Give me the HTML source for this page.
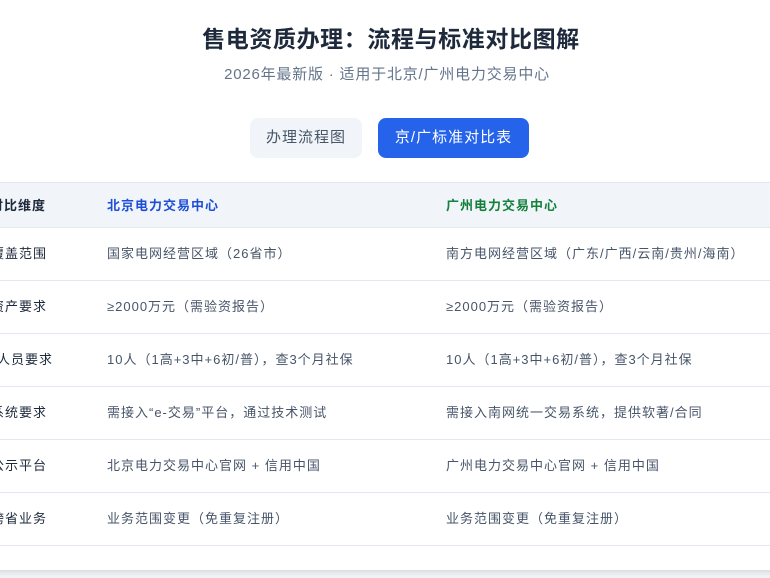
<!DOCTYPE html>
<html><head><meta charset="utf-8"><style>
*{margin:0;padding:0;box-sizing:border-box}
body{width:770px;height:578px;overflow:hidden;background:#f1f3f6;font-family:"Liberation Sans","Noto Sans CJK SC",sans-serif;position:relative}
.card{position:absolute;left:-40px;top:0;width:850px;height:570px;background:#fff;box-shadow:0 2px 6px rgba(0,0,0,.12)}
h1{position:absolute;left:6px;width:770px;top:24px;text-align:center;font-size:23px;font-weight:700;color:#1e293b;line-height:30px;letter-spacing:0.6px}
.sub{position:absolute;left:2px;width:770px;top:65px;text-align:center;font-size:15px;color:#64748b;line-height:20px;letter-spacing:0.8px}
.btn{position:absolute;top:118px;height:40px;border-radius:8px;font-size:15px;line-height:40px;text-align:center;letter-spacing:1px}
.b1{left:250px;width:112px;background:#f1f5f9;color:#475569}
.b2{left:378px;width:151px;background:#2563eb;color:#fff}
.row{position:absolute;left:0;width:770px;border-bottom:1px solid #e2e8f0;font-size:13px;color:#475569;letter-spacing:1px}
.row span{position:absolute;top:0;white-space:nowrap}
.c1{left:-9px;color:#1e293b}
.c2{left:107px}.c3{left:446px}
.hd{top:182px;height:46px;background:#f1f5f9;border-top:1px solid #e2e8f0;line-height:45px;font-weight:700}
.hd .c2{color:#1d4ed8}.hd .c3{color:#15803d}
.r{height:53px;line-height:52px}
</style></head><body>
<div class="card"></div>
<h1>售电资质办理：流程与标准对比图解</h1>
<div class="sub">2026年最新版 · 适用于北京/广州电力交易中心</div>
<div class="btn b1">办理流程图</div>
<div class="btn b2">京/广标准对比表</div>
<div class="row hd"><span class="c1" style="left:-10px">对比维度</span><span class="c2">北京电力交易中心</span><span class="c3">广州电力交易中心</span></div>
<div class="row r" style="top:228px"><span class="c1">覆盖范围</span><span class="c2">国家电网经营区域（26省市）</span><span class="c3">南方电网经营区域（广东/广西/云南/贵州/海南）</span></div>
<div class="row r" style="top:281px"><span class="c1">资产要求</span><span class="c2">≥2000万元（需验资报告）</span><span class="c3">≥2000万元（需验资报告）</span></div>
<div class="row r" style="top:334px"><span class="c1" style="left:-3px">人员要求</span><span class="c2">10人（1高+3中+6初/普），查3个月社保</span><span class="c3">10人（1高+3中+6初/普），查3个月社保</span></div>
<div class="row r" style="top:387px"><span class="c1">系统要求</span><span class="c2">需接入“e-交易”平台，通过技术测试</span><span class="c3">需接入南网统一交易系统，提供软著/合同</span></div>
<div class="row r" style="top:440px"><span class="c1">公示平台</span><span class="c2">北京电力交易中心官网 + 信用中国</span><span class="c3">广州电力交易中心官网 + 信用中国</span></div>
<div class="row r" style="top:493px"><span class="c1">跨省业务</span><span class="c2">业务范围变更（免重复注册）</span><span class="c3">业务范围变更（免重复注册）</span></div>
</body></html>
